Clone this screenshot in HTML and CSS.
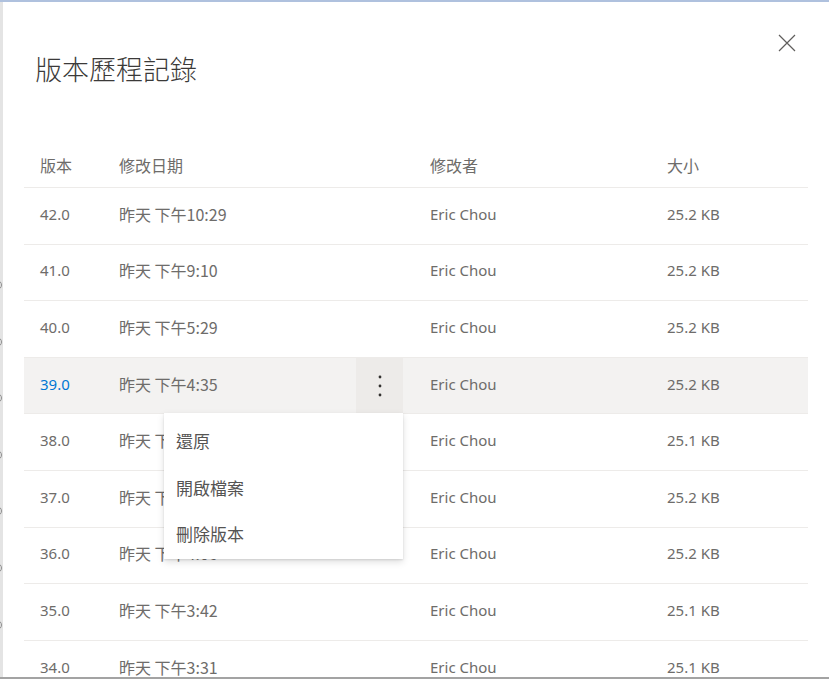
FILE: index.html
```html
<!DOCTYPE html>
<html lang="zh-Hant">

<head>
  <meta charset="UTF-8">
  <meta name="viewport" content="width=device-width, initial-scale=1.0">
  <title>版本歷程記錄</title>
  <link rel="stylesheet" href="styles.css">
</head>

<body>
  <div class="screen">
    <!-- 後面清單露出的一小條 -->
    <div class="edge">
      <i class="dot"></i><i class="dot"></i><i class="dot"></i><i class="dot"></i>
      <i class="dot"></i><i class="dot"></i><i class="dot"></i>
    </div>

    <div class="dialog">
      <h1 class="title">版本歷程記錄</h1>
      <button class="close" aria-label="關閉">
        <svg width="18" height="18" viewBox="0 0 18 18">
          <path d="M1 1 L17 17 M17 1 L1 17" stroke="#605e5c" stroke-width="1.2" fill="none" />
        </svg>
      </button>

      <div class="table">
        <div class="row head">
          <div class="cell zh">版本</div>
          <div class="cell zh">修改日期</div>
          <div class="cell zh">修改者</div>
          <div class="cell zh">大小</div>
        </div>

        <div class="row">
          <div class="cell">42.0</div>
          <div class="cell zh">昨天 下午10:29</div>
          <div class="cell">Eric Chou</div>
          <div class="cell">25.2 KB</div>
        </div>
        <div class="row">
          <div class="cell">41.0</div>
          <div class="cell zh">昨天 下午9:10</div>
          <div class="cell">Eric Chou</div>
          <div class="cell">25.2 KB</div>
        </div>
        <div class="row">
          <div class="cell">40.0</div>
          <div class="cell zh">昨天 下午5:29</div>
          <div class="cell">Eric Chou</div>
          <div class="cell">25.2 KB</div>
        </div>
        <div class="row active">
          <div class="cell version">39.0</div>
          <div class="cell zh date">
            <span>昨天 下午4:35</span>
            <button class="more" aria-label="更多">
              <svg width="4" height="22" viewBox="0 0 4 22">
                <circle cx="2" cy="2" r="1.4" fill="#323130" />
                <circle cx="2" cy="11" r="1.4" fill="#323130" />
                <circle cx="2" cy="20" r="1.4" fill="#323130" />
              </svg>
            </button>
            <ul class="menu">
              <li>還原</li>
              <li>開啟檔案</li>
              <li>刪除版本</li>
            </ul>
          </div>
          <div class="cell">Eric Chou</div>
          <div class="cell">25.2 KB</div>
        </div>
        <div class="row">
          <div class="cell">38.0</div>
          <div class="cell zh">昨天 下午4:30</div>
          <div class="cell">Eric Chou</div>
          <div class="cell">25.1 KB</div>
        </div>
        <div class="row">
          <div class="cell">37.0</div>
          <div class="cell zh">昨天 下午4:21</div>
          <div class="cell">Eric Chou</div>
          <div class="cell">25.2 KB</div>
        </div>
        <div class="row">
          <div class="cell">36.0</div>
          <div class="cell zh">昨天 下午4:06</div>
          <div class="cell">Eric Chou</div>
          <div class="cell">25.2 KB</div>
        </div>
        <div class="row">
          <div class="cell">35.0</div>
          <div class="cell zh">昨天 下午3:42</div>
          <div class="cell">Eric Chou</div>
          <div class="cell">25.1 KB</div>
        </div>
        <div class="row">
          <div class="cell">34.0</div>
          <div class="cell zh">昨天 下午3:31</div>
          <div class="cell">Eric Chou</div>
          <div class="cell">25.1 KB</div>
        </div>
      </div>
    </div>
  </div>
</body>

</html>
```

FILE: styles.css
```css
body {
  margin: 0;
  font-family: "Noto Sans", "Noto Sans CJK TC", sans-serif;
  font-size: 15px;
  color: #6e6c6a;
}

.screen {
  display: flex;
  height: 679px;
  box-sizing: border-box;
  overflow: hidden;
  border-top: 2px solid #afc1de;
  border-bottom: 2px solid #a3a3a3;
}

.edge {
  display: flex;
  flex-direction: column;
  gap: 46.6px;
  width: 3px;
  padding-top: 278px;
  overflow: hidden;
  background: #e4e4e4;
}

.edge .dot {
  flex: none;
  width: 10px;
  height: 10px;
  margin-left: -8px;
  border: 1px solid #8f8f8f;
  border-radius: 50%;
  box-sizing: border-box;
}

.dialog {
  position: relative;
  flex: 1;
  padding: 49px 21px 0 21px;
  background: #fff;
  overflow: hidden;
}

.zh {
  font-family: "Noto Sans CJK TC", sans-serif;
  font-size: 16px;
}

.title {
  margin: 0 0 59px 11px;
  font-family: "Noto Sans CJK TC", sans-serif;
  font-size: 27px;
  font-weight: 300;
  line-height: 36px;
  color: #3b3a39;
}

.close {
  position: absolute;
  top: 25px;
  right: 26px;
  width: 32px;
  height: 32px;
  padding: 0;
  border: none;
  background: none;
  display: flex;
  align-items: center;
  justify-content: center;
}

.row {
  display: grid;
  grid-template-columns: 79px 311px 237px 1fr;
  height: 56.6px;
  box-sizing: border-box;
  border-bottom: 1px solid #edebe9;
}

.row.head {
  height: 42px;
}

.cell {
  display: flex;
  align-items: center;
  padding-left: 16px;
  padding-bottom: 4px;
  white-space: nowrap;
}

.row.active {
  background: #f3f2f1;
}

.row.active .version {
  color: #0078d4;
}

.cell.date {
  position: relative;
  justify-content: space-between;
  align-items: stretch;
  padding-bottom: 0;
}

.cell.date span {
  align-self: center;
  margin-bottom: 4px;
}

.more {
  width: 47px;
  margin-right: 11px;
  padding: 0;
  border: none;
  background: #edebe9;
  display: flex;
  align-items: center;
  justify-content: center;
}

.menu {
  position: absolute;
  top: 100%;
  right: 11px;
  z-index: 2;
  width: 239px;
  margin: 0;
  padding: 4px 0 2px;
  list-style: none;
  background: #fff;
  box-shadow: 0 3.2px 7.2px rgba(0, 0, 0, 0.13), 0 0.6px 1.8px rgba(0, 0, 0, 0.11);
}

.menu li {
  display: flex;
  align-items: center;
  height: 46.5px;
  padding-left: 12px;
  font-size: 17px;
  color: #555453;
}
```
